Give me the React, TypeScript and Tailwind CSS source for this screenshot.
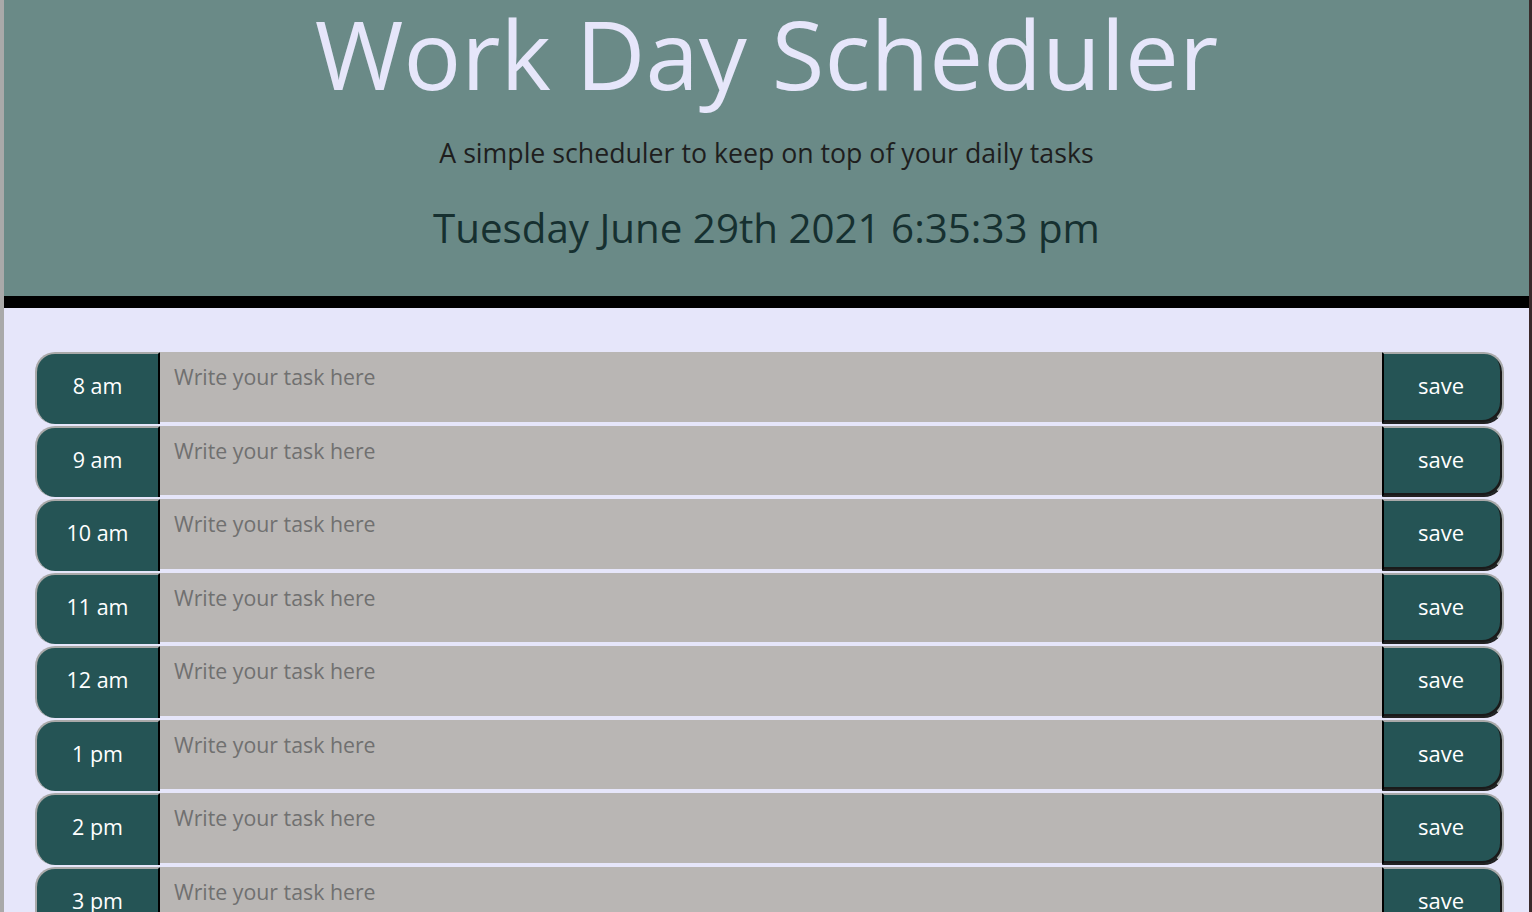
import { useState } from "react";

const hours = ["8 am", "9 am", "10 am", "11 am", "12 am", "1 pm", "2 pm", "3 pm", "4 pm", "5 pm"];

function HourRow({ label }: { label: string }) {
  const [text, setText] = useState("");

  return (
    <div className="flex h-[71.5px]">
      {/* hour label */}
      <div className="flex w-[125px] shrink-0 items-center justify-center rounded-l-[20px] border-t-2 border-l-2 border-r-2 border-t-[#a9a9a9] border-l-[#a9a9a9] border-r-black bg-[#255455] pb-[5px] text-[21.5px] text-white">
        {label}
      </div>
      <textarea
        value={text}
        onChange={(e) => setText(e.target.value)}
        placeholder="Write your task here"
        className="flex-1 resize-none border-b-2 border-[#e6e6fa] bg-[#b9b6b4] px-[14px] pt-[9px] text-[21.3px] text-black placeholder:text-[#707070] outline-none"
      />
      <button className="w-[122px] shrink-0 rounded-r-[20px] border-2 border-t-[#a9a9a9] border-r-[#a9a9a9] border-l-black border-b-[#222] bg-[#255455] pb-[4px] pr-[4px] text-[22px] text-white shadow-[inset_-2px_-2px_0_#1a1a1a]">
        save
      </button>
    </div>
  );
}

export default function App() {
  return (
    <div
      className="min-h-[912px] border-l-[4px] border-r-[3px] border-l-[#a9a9a9] border-r-[#3a2a2a] bg-[#e6e6fa]"
      style={{ fontFamily: '"Open Sans", "Noto Sans", sans-serif' }}
    >
      {/* Header */}
      <header className="flex h-[308px] flex-col items-center border-b-[12px] border-black bg-[#6a8a87]">
        <h1 className="mt-[-5px] text-[96px] font-normal leading-[1.2] text-[#e6e6fa]">
          Work Day Scheduler
        </h1>
        <p className="mt-[27px] text-[26.7px] font-normal leading-[1.2] text-[#1e1e1e]">
          A simple scheduler to keep on top of your daily tasks
        </p>
        <p className="mt-[35px] text-[40.3px] font-medium leading-[1.2] text-[#163030]">
          Tuesday June 29th 2021 6:35:33 pm
        </p>
      </header>

      {/* Time blocks */}
      <div className="ml-[31px] mr-[25px] mt-[44px] flex flex-col gap-[2px]">
        {hours.map((h) => (
          <HourRow key={h} label={h} />
        ))}
      </div>
    </div>
  );
}
